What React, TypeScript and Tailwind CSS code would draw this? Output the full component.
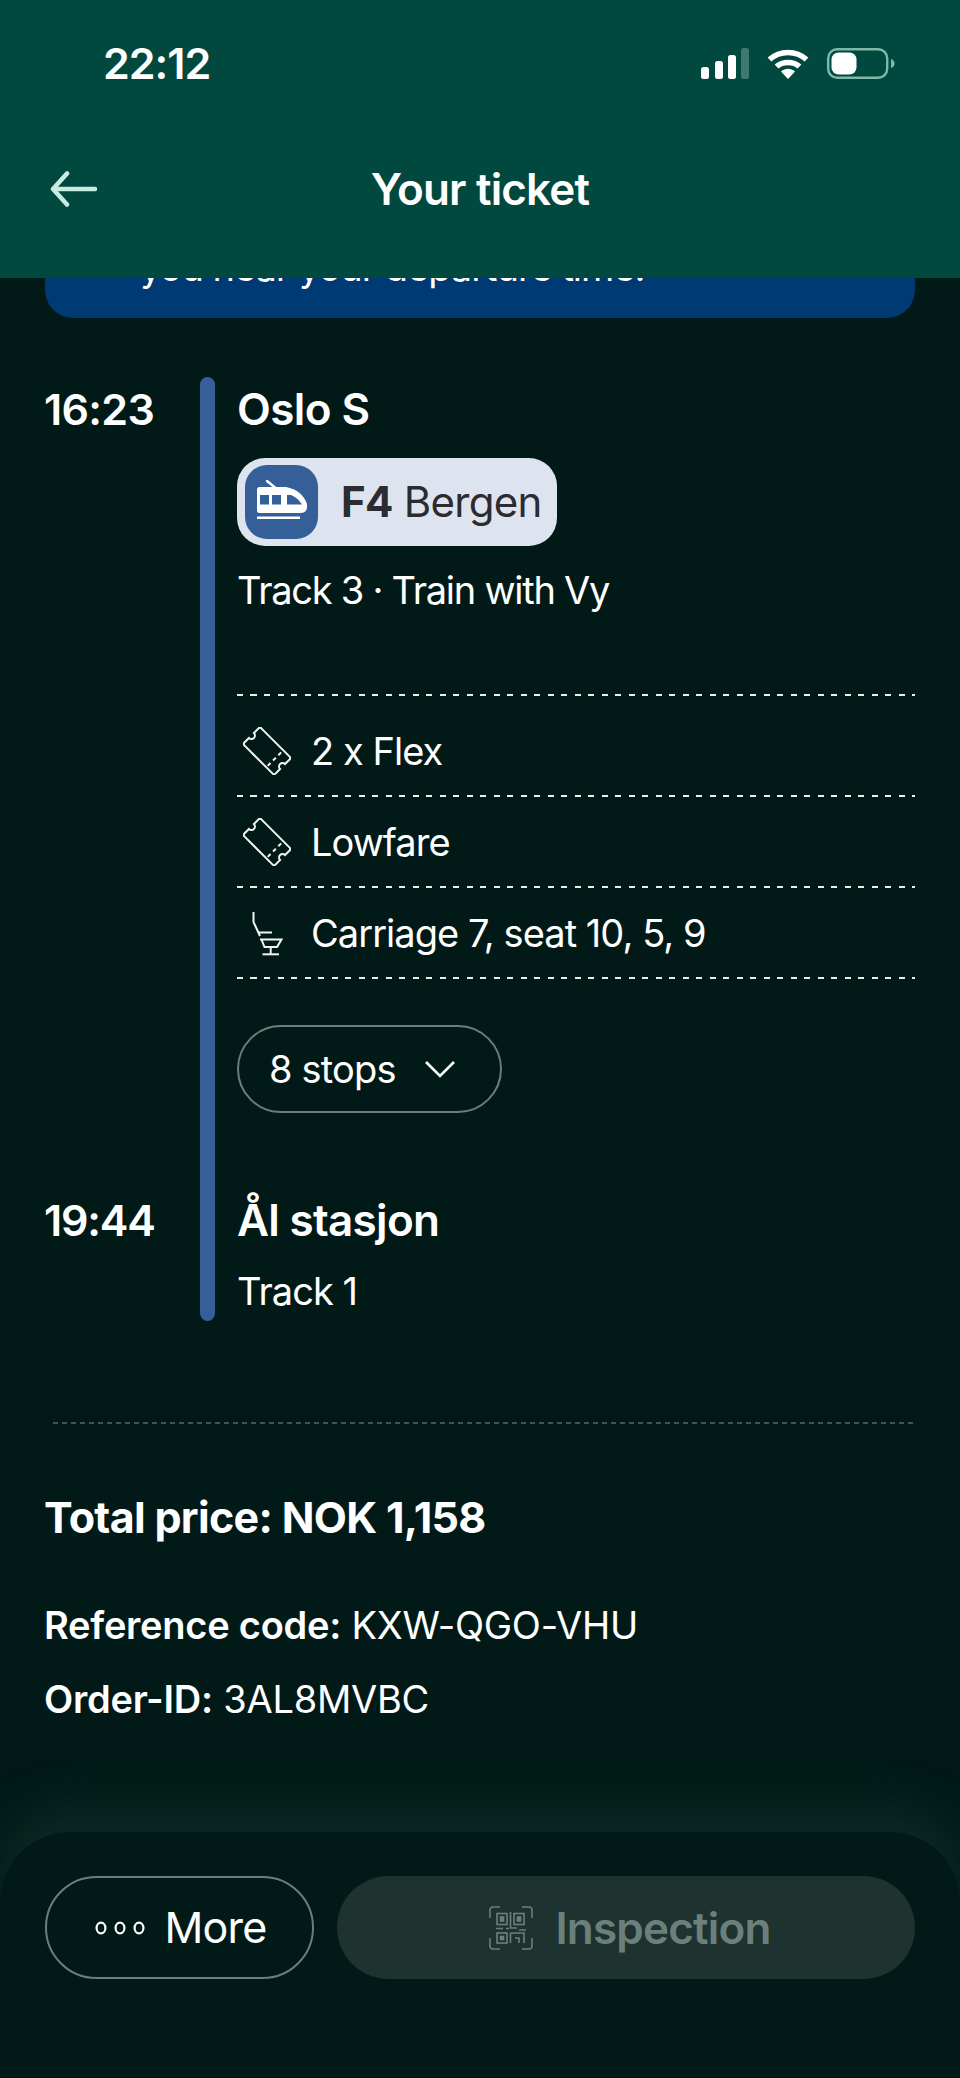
const dashes =
  "h-[2px] bg-[repeating-linear-gradient(90deg,#e8eeec_0,#e8eeec_6px,transparent_6px,transparent_13.5px)]";

function SignalIcon() {
  return (
    <svg width="48" height="31" viewBox="0 0 48 31" fill="#fff">
      <rect x="0" y="19" width="8" height="12" rx="2.5" />
      <rect x="14" y="13" width="8" height="18" rx="2.5" />
      <rect x="27" y="7" width="8" height="24" rx="2.5" />
      <rect x="40" y="0" width="8" height="31" rx="2.5" fill="#3d7a6e" />
    </svg>
  );
}

function WifiIcon() {
  return (
    <svg width="42" height="31" viewBox="0 0 42 31" fill="none" stroke="#fff" strokeWidth="5.5">
      <path d="M2.5 11.5C13 2 29 2 39.5 11.5" />
      <path d="M9.5 18.5C15.5 13 26.5 13 32.5 18.5" />
      <path d="M14 23.5L21 31L28 23.5C24 19.8 18 19.8 14 23.5Z" fill="#fff" stroke="none" />
    </svg>
  );
}

function BatteryIcon() {
  return (
    <svg width="68" height="31" viewBox="0 0 68 31" fill="none">
      <rect x="1.2" y="1.2" width="59" height="28.6" rx="9" stroke="#7db8aa" strokeWidth="2.4" />
      <rect x="4.5" y="4.5" width="25" height="22" rx="7" fill="#fff" />
      <path d="M64 11C66.5 12 67.5 13.5 67.5 15.5C67.5 17.5 66.5 19 64 20Z" fill="#7db8aa" />
    </svg>
  );
}

function TrainIcon() {
  return (
    <svg width="73" height="74" viewBox="0 0 73 74">
      <path d="M22 16L30 22.5" stroke="#fff" strokeWidth="2.4" strokeLinecap="round" />
      <path
        d="M12 24.5Q12 22 14.5 22H41Q57 25 62 39V42Q62 48 55 48H14.5Q12 48 12 45.5Z"
        fill="#fff"
      />
      <rect x="15" y="30" width="9" height="9.5" fill="#345f99" />
      <rect x="27" y="30" width="9" height="9.5" fill="#345f99" />
      <path d="M42 30H46Q53 33 57 39.5H42Z" fill="#345f99" />
      <rect x="12" y="51.5" width="43" height="2.5" fill="#fff" />
    </svg>
  );
}

function TicketIcon() {
  return (
    <svg width="48" height="48" viewBox="-24 -24 48 48" fill="none" stroke="#f2f5f4" strokeWidth="2">
      <g transform="rotate(45)">
        <path d="M-20 -12H20a2 2 0 0 1 2 2V-3.5a3.5 3.5 0 0 0 0 7V10a2 2 0 0 1 -2 2H-20a2 2 0 0 1 -2 -2V3.5a3.5 3.5 0 0 0 0 -7V-10a2 2 0 0 1 2 -2Z" />
        <path d="M11 -9V10" strokeDasharray="4 3.5" />
      </g>
    </svg>
  );
}

function SeatIcon() {
  return (
    <svg width="48" height="48" viewBox="0 0 48 48" fill="none" stroke="#f2f5f4" strokeWidth="2">
      <path d="M10.5 3V13L17 27" />
      <path d="M15 23.5H29" />
      <path d="M17 30.5H38.5L34 38H21.5L18.5 30.5" />
      <path d="M27.7 38V45" />
      <path d="M19.5 45.3H36" />
    </svg>
  );
}

function QrIcon() {
  return (
    <svg width="44" height="44" viewBox="0 0 44 44" fill="none" stroke="#6b807d" strokeWidth="1.6">
      <path d="M1 12V4Q1 1 4 1H11M33 1H40Q43 1 43 4V12M43 32V40Q43 43 40 43H33M11 43H4Q1 43 1 40V32" />
      <rect x="8" y="7.5" width="10" height="11" />
      <rect x="11.5" y="11" width="3" height="4" fill="#6b807d" />
      <rect x="25" y="7.5" width="10" height="11" />
      <rect x="28.5" y="11" width="3" height="4" fill="#6b807d" />
      <rect x="8" y="27" width="10" height="10" />
      <rect x="11.5" y="30.5" width="3" height="3" fill="#6b807d" />
      <path d="M7 22.5H14M17 22.5H20M21.5 6V22H28M30 24H37M21.5 27H35V37M21.5 27V37M26 32H30V37" />
    </svg>
  );
}

function DotsIcon() {
  return (
    <svg width="50" height="14" viewBox="0 0 50 14" fill="none" stroke="#fff" strokeWidth="2.2">
      <ellipse cx="6" cy="7" rx="4.4" ry="5.4" />
      <ellipse cx="25" cy="7" rx="4.4" ry="5.4" />
      <ellipse cx="44" cy="7" rx="4.4" ry="5.4" />
    </svg>
  );
}

function DetailRow({ icon, label, first }: { icon: React.ReactNode; label: string; first?: boolean }) {
  return (
    <div className={`flex items-center pl-[6px] ${first ? "h-[99px] pt-[11px]" : "h-[89px] pt-[1px]"}`}>
      {icon}
      <span className="ml-[20px] text-[38px] leading-[48px] tracking-[-0.95px]">{label}</span>
    </div>
  );
}

export default function App() {
  return (
    <div
      className="w-[960px] h-[2078px] flex flex-col overflow-hidden bg-[#011a17] text-white"
      style={{ fontFamily: "Inter, 'Noto Sans', sans-serif" }}
    >
      <header className="relative z-10 h-[278px] shrink-0 bg-[#01483e]">
        <div className="flex items-start justify-between pt-[48px] pl-[103px] pr-[65px]">
          <span className="text-[43px] leading-[31px] font-semibold tracking-[-1px]">22:12</span>
          <div className="flex items-center gap-[18px]">
            <SignalIcon />
            <WifiIcon />
            <BatteryIcon />
          </div>
        </div>
        <div className="relative flex items-center justify-center mt-[90px]">
          <svg
            className="absolute left-[50px]"
            width="47"
            height="36"
            viewBox="0 0 47 36"
            fill="none"
            stroke="#c8ebe2"
            strokeWidth="4.5"
            strokeLinecap="round"
            strokeLinejoin="round"
          >
            <path d="M45 18H3M17 2.5L3 18L17 33.5" />
          </svg>
          <span className="text-[44px] leading-[40px] font-semibold tracking-[-0.85px]">Your ticket</span>
        </div>
      </header>

      <main className="flex-1 px-[45px]">
        <div className="-mt-[60px] h-[100px] rounded-[28px] bg-[#003a75] pl-[95px] pt-[25px] text-[38px] leading-[48px] tracking-[-1px]">
          you near your departure time.
        </div>

        <div className="mt-[59px] grid grid-cols-[155px_15px_1fr]">
          <div className="pt-[8px] -ml-[1px] text-[43px] leading-[48px] font-semibold tracking-[-0.7px]">16:23</div>
          <div className="row-span-2 rounded-full bg-[#345f99]" />
          <div className="pl-[22px]">
            <div className="pt-[8px] text-[44px] leading-[48px] font-semibold tracking-[-0.6px]">Oslo S</div>
            <div className="mt-[25px] flex items-center w-[320px] h-[88px] rounded-[28px] bg-[#dde4f0] pl-[8px] text-[#2b2b30]">
              <div className="w-[73px] h-[74px] rounded-[22px] bg-[#345f99]">
                <TrainIcon />
              </div>
              <span className="ml-[23px] text-[42px] leading-[48px] tracking-[-0.7px]">
                <b className="font-bold">F4</b> Bergen
              </span>
            </div>
            <div className="mt-[20px] text-[38px] leading-[48px] tracking-[-1.25px]">Track 3 · Train with Vy</div>
            <div className={`mt-[80px] ${dashes}`} />
            <DetailRow first icon={<TicketIcon />} label="2 x Flex" />
            <div className={dashes} />
            <DetailRow icon={<TicketIcon />} label="Lowfare" />
            <div className={dashes} />
            <DetailRow icon={<SeatIcon />} label="Carriage 7, seat 10, 5, 9" />
            <div className={dashes} />
            <button className="mt-[46px] flex items-center w-[265px] h-[88px] rounded-full border-2 border-[#6a7f7b] pl-[30px] text-[38px] leading-[48px] tracking-[-0.8px]">
              8 stops
              <svg
                className="ml-[29px]"
                width="30"
                height="18"
                viewBox="0 0 30 18"
                fill="none"
                stroke="#fff"
                strokeWidth="2.6"
              >
                <path d="M1 2L15 16L29 2" />
              </svg>
            </button>
          </div>
          <div className="mt-[83px] -ml-[1px] text-[43px] leading-[48px] font-semibold tracking-[-1.2px]">19:44</div>
          <div className="pl-[22px] pb-[6px]">
            <div className="mt-[83px] text-[44px] leading-[48px] font-semibold tracking-[-0.7px]">Ål stasjon</div>
            <div className="mt-[23px] text-[38px] leading-[48px] tracking-[-0.95px]">Track 1</div>
          </div>
        </div>

        <div className="mt-[101px] ml-[8px] -mr-[2px] h-[2px] bg-[repeating-linear-gradient(90deg,#3f5552_0,#3f5552_5px,transparent_5px,transparent_9px)]" />

        <div className="mt-[67px] text-[43px] leading-[52px] font-bold tracking-[-0.68px] -ml-[1px]">Total price: NOK 1,158</div>
        <div className="mt-[58px] text-[38px] leading-[48px] tracking-[-0.25px] -ml-[1px]">
          <b className="font-semibold">Reference code:</b> KXW-QGO-VHU
        </div>
        <div className="mt-[26px] text-[38px] leading-[48px] tracking-[-0.25px] -ml-[1px]">
          <b className="font-semibold">Order-ID:</b> 3AL8MVBC
        </div>
      </main>

      <footer className="h-[246px] shrink-0 rounded-t-[70px] bg-[#011a17] px-[45px] pt-[44px] shadow-[0_-24px_50px_rgba(40,70,66,0.35)]">
        <div className="flex gap-[23px] h-[103px]">
          <button className="flex items-center justify-center gap-[20px] w-[269px] pl-[2px] rounded-full border-2 border-[#6a7f7b] text-[43px] tracking-[-0.8px]">
            <DotsIcon />
            More
          </button>
          <button className="flex flex-1 items-center justify-center gap-[22px] pl-[8px] rounded-full bg-[#1e3230] text-[44px] font-semibold tracking-[-0.8px] text-[#6b807d]">
            <QrIcon />
            Inspection
          </button>
        </div>
      </footer>
    </div>
  );
}
